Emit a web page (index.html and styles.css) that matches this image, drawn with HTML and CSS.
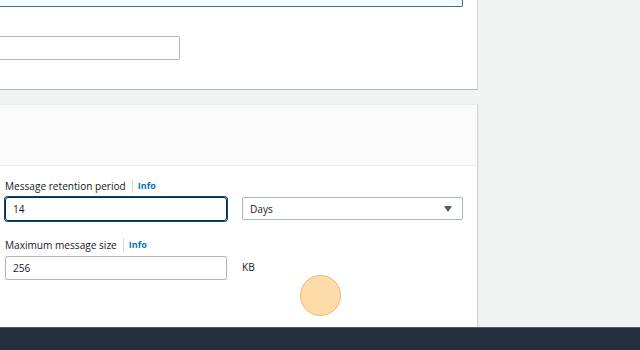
FILE: index.html
```html
<!DOCTYPE html>
<html>
<head>
<meta charset="utf-8">
<link rel="stylesheet" href="styles.css">
</head>
<body>
<div class="page">
  <div class="main">
    <section class="card card-top">
      <div class="notice"></div>
      <div class="top-field">
        <div class="name-box"></div>
      </div>
    </section>
    <section class="card card-config">
      <div class="card-header"></div>
      <div class="card-body">
        <div class="field">
          <div class="label-row"><span class="label">Message retention period</span><span class="info">Info</span></div>
          <div class="control-row">
            <div class="input focused">14</div>
            <div class="select">Days<span class="caret"></span></div>
          </div>
        </div>
        <div class="field">
          <div class="label-row"><span class="label">Maximum message size</span><span class="info">Info</span></div>
          <div class="control-row">
            <div class="input">256</div>
            <div class="unit">KB</div>
          </div>
        </div>
      </div>
    </section>
  </div>
  <div class="side"></div>
</div>
<footer class="footer"></footer>
<div class="cursor"></div>
</body>
</html>
```
FILE: styles.css
```css
html, body {
  margin: 0;
  padding: 0;
}
body {
  width: 640px;
  height: 350px;
  overflow: hidden;
  background: #f2f3f3;
  font-family: "Open Sans", "Noto Sans", sans-serif;
  color: #16191f;
  display: flex;
  flex-direction: column;
  position: relative;
}
.page {
  flex: 1;
  display: flex;
  min-height: 0;
}
.main {
  width: 478px;
  display: flex;
  flex-direction: column;
  gap: 14px;
}
.side {
  flex: 1;
}
.card {
  background: #fff;
  border-right: 1px solid #d5dbdb;
  box-shadow: 0 1px 1px rgba(0, 28, 36, 0.3);
}
.card-top {
  height: 90px;
  box-sizing: border-box;
  border-bottom: 1px solid #aab7b8;
  box-shadow: none;
}
.notice {
  height: 7px;
  width: 463px;
  box-sizing: border-box;
  background: #f1faff;
  border-right: 1px solid #44697d;
  border-bottom: 1px solid #44697d;
  border-radius: 0 0 2px 0;
}
.top-field {
  padding-top: 29px;
}
.name-box {
  width: 180px;
  height: 24px;
  box-sizing: border-box;
  border: 1px solid #aab7b8;
  border-left: none;
  border-radius: 0 2px 2px 0;
  background: #fff;
}
.card-config {
  flex: 1;
  display: flex;
  flex-direction: column;
  border-top: 1px solid #eaeded;
}
.card-header {
  height: 60px;
  background: #fafafa;
  border-bottom: 1px solid #eaeded;
}
.card-body {
  padding: 12px 10px 0 5px;
  display: flex;
  flex-direction: column;
  gap: 16px;
}
.label-row {
  display: flex;
  align-items: center;
  height: 16px;
  margin-bottom: 3px;
}
.label {
  font-size: 10.1px;
  color: #16191f;
  padding-right: 6px;
  border-right: 1px solid #d5dbdb;
  line-height: 14px;
}
.info {
  font-size: 9px;
  font-weight: 700;
  color: #0073bb;
  padding-left: 5px;
  line-height: 14px;
}
.control-row {
  display: flex;
  align-items: center;
  gap: 15px;
}
.input {
  width: 222px;
  height: 24px;
  flex-shrink: 0;
  box-sizing: border-box;
  border: 1px solid #aab7b8;
  border-radius: 2px;
  font-size: 10.1px;
  padding: 0 7px;
  display: flex;
  align-items: center;
  color: #16191f;
}
.input.focused {
  border: 1px solid #00304f;
  box-shadow: 0 0 0 1px #0a4a74;
  border-radius: 3px;
}
.select {
  width: 221px;
  height: 23px;
  flex-shrink: 0;
  box-sizing: border-box;
  border: 1px solid #aab7b8;
  border-radius: 2px;
  font-size: 10.1px;
  padding: 0 10px 0 7px;
  display: flex;
  align-items: center;
  justify-content: space-between;
  align-self: flex-start;
}
.caret {
  width: 0;
  height: 0;
  border-left: 4px solid transparent;
  border-right: 4px solid transparent;
  border-top: 6px solid #545b64;
}
.unit {
  font-size: 10.1px;
  color: #16191f;
  margin-top: -2px;
}
.footer {
  height: 23px;
  background: #232f3e;
  border-top: 1px solid #545b64;
  box-sizing: border-box;
}
.cursor {
  position: absolute;
  left: 300px;
  top: 275px;
  width: 41px;
  height: 41px;
  box-sizing: border-box;
  border-radius: 50%;
  background: #fddcaa;
  border: 1px solid #f0b575;
}
```
